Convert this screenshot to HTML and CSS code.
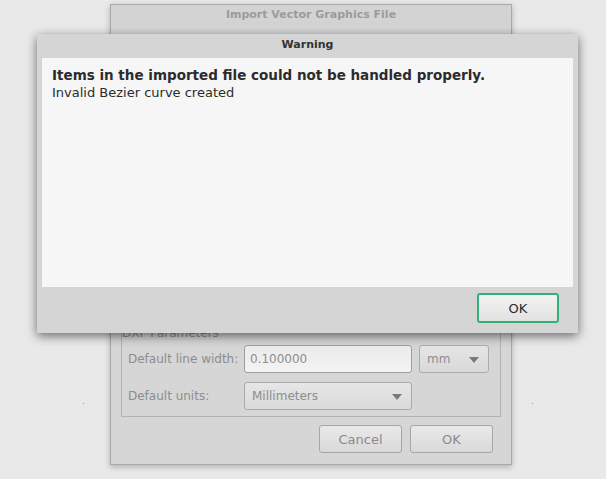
FILE: index.html
```html
<!DOCTYPE html>
<html lang="en">
<head>
  <meta charset="UTF-8">
  <title>Warning</title>
  <link rel="stylesheet" href="styles.css">
</head>
<body>
  <div class="desk">
    <span class="speck speck-left"></span>
    <span class="speck speck-right"></span>

    <div class="window import">
      <div class="titlebar dim">Import Vector Graphics File</div>
      <div class="spacer"></div>
      <div class="group">
        <div class="group-title">DXF Parameters</div>
        <div class="grid">
          <label>Default line width:</label>
          <div class="field-row">
            <div class="input">0.100000</div>
            <div class="combo small">mm<span class="arrow"></span></div>
          </div>
          <label>Default units:</label>
          <div class="field-row">
            <div class="combo wide">Millimeters<span class="arrow"></span></div>
          </div>
        </div>
      </div>
      <div class="buttons">
        <button class="btn dim-btn">Cancel</button>
        <button class="btn dim-btn">OK</button>
      </div>
    </div>

    <div class="window warning">
      <div class="titlebar">Warning</div>
      <div class="message">
        <p class="headline">Items in the imported file could not be handled properly.</p>
        <p>Invalid Bezier curve created</p>
      </div>
      <div class="buttons front">
        <button class="btn default">OK</button>
      </div>
    </div>
  </div>
</body>
</html>
```

FILE: styles.css
```css
html, body { margin: 0; padding: 0; }
body { background: #e9e9e9; font-family: "DejaVu Sans", sans-serif; width: 606px; height: 479px; overflow: hidden; }
.desk { position: relative; width: 606px; height: 479px; }

.speck { position: absolute; top: 403px; width: 1px; height: 1px; background: #9a9a9a; }
.speck-left { left: 83px; }
.speck-right { left: 532px; }

.window { position: absolute; box-sizing: border-box; background: #d6d6d6; display: flex; flex-direction: column; }

.import {
  left: 110px; top: 4px; width: 402px; height: 461px;
  border: 1px solid #a9a9a9;
  box-shadow: 0 2px 6px rgba(0,0,0,0.25);
  padding-bottom: 11px;
}
.titlebar {
  height: 20px; line-height: 20px; text-align: center;
  font-size: 11px; font-weight: bold; color: #333;
}
.titlebar.dim { color: #9b9b9b; background: #d3d3d3; }
.spacer { flex: 1; }

.group {
  margin: 0 10px 0 10px;
  border: 1px solid #b3b3b3;
  padding: 0 6px 6px 6px;
  color: #8d8d8d; font-size: 12px;
}
.group-title { margin-left: -6px; line-height: 14px; margin-bottom: 5px; }
.grid { display: grid; grid-template-columns: 116px auto; row-gap: 9px; align-items: center; }
.grid label { line-height: 28px; }
.field-row { display: flex; gap: 7px; }

.input {
  box-sizing: border-box; width: 168px; height: 28px; line-height: 26px;
  padding: 0 5px; border: 1px solid #9e9e9e; border-radius: 3px;
  background: linear-gradient(#ececec, #f3f3f3);
}
.combo {
  position: relative; box-sizing: border-box; height: 28px; line-height: 26px;
  padding: 0 7px; border: 1px solid #ababab; border-radius: 3px;
  background: linear-gradient(#e6e6e6, #d9d9d9);
}
.combo.small { width: 70px; }
.combo.wide { width: 168px; }
.arrow {
  position: absolute; right: 9px; top: 11px;
  border-left: 5px solid transparent; border-right: 5px solid transparent;
  border-top: 6px solid #7a7a7a;
}

.buttons { display: flex; justify-content: flex-end; gap: 8px; margin: 8px 18px 0 0; }
.btn {
  box-sizing: border-box; width: 83px; height: 28px; padding: 0;
  font-family: "DejaVu Sans", sans-serif; font-size: 13px;
  border: 1px solid #a6a6a6; border-radius: 3px;
  background: linear-gradient(#e9e9e9, #d9d9d9);
}
.dim-btn { color: #8b8b8b; }

.warning {
  left: 37px; top: 34px; width: 541px; height: 299px;
  background: #d5d5d5;
  box-shadow: 0 3px 10px rgba(0,0,0,0.55);
}
.warning .titlebar { height: 24px; line-height: 22px; }
.message {
  height: 229px; margin: 0 5px; box-sizing: border-box;
  background: #f6f6f6; padding: 9px 10px;
  font-size: 13px; line-height: 17px; color: #2b2b2b;
}
.message p { margin: 0; }
.headline { font-weight: bold; font-size: 13.5px; }
.buttons.front { margin: 6px 19px 0 0; }
.btn.default {
  width: 82px; height: 30px; color: #2b2b2b;
  border: 2px solid #32b07a;
  background: linear-gradient(#f2f2f2, #e2e2e2);
}
```
